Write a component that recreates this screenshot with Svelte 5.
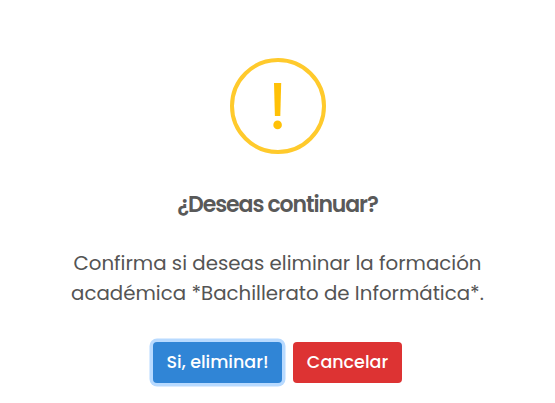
<script>
  const title = '¿Deseas continuar?';
  const lines = [
    'Confirma si deseas eliminar la formación',
    'académica *Bachillerato de Informática*.'
  ];
</script>

<main class="dialog" role="alertdialog" aria-label={title}>
  <svg class="icon" width="96" height="96" viewBox="0 0 96 96" aria-hidden="true">
    <circle cx="48" cy="48" r="46" fill="none" stroke="#ffca2c" stroke-width="4" />
    <path d="M44 25h7.2l-.9 33h-5.4z" fill="#ffc107" />
    <circle cx="47.6" cy="66.9" r="4.3" fill="#ffc107" />
  </svg>
  <h2>{title}</h2>
  <p>
    {#each lines as line}
      <span>{line}</span>
    {/each}
  </p>
  <div class="actions">
    <button class="confirm" type="button">Si, eliminar!</button>
    <button class="cancel" type="button">Cancelar</button>
  </div>
</main>

<style>
  :global(body) {
    background: #fff;
  }
  .dialog {
    box-sizing: border-box;
    width: 555px;
    height: 403px;
    padding-top: 58px;
    display: flex;
    flex-direction: column;
    align-items: center;
    overflow: hidden;
    font-family: Poppins, Inter, sans-serif;
    color: #545454;
    -webkit-font-smoothing: antialiased;
  }
  .icon {
    display: block;
    margin-left: 1px;
  }
  h2 {
    margin: 35px 0 0;
    font-size: 22px;
    font-weight: 600;
    line-height: 32px;
    letter-spacing: -1.1px;
    color: #595959;
    white-space: nowrap;
  }
  p {
    margin: 27px 0 0;
    display: flex;
    flex-direction: column;
    align-items: center;
    font-size: 19.8px;
    line-height: 30px;
    white-space: nowrap;
  }
  .actions {
    display: flex;
    gap: 11px;
    margin-top: 34px;
  }
  button {
    height: 41px;
    padding: 0;
    border: 0;
    border-radius: 4px;
    color: #fff;
    font: inherit;
    font-size: 17.5px;
    font-weight: 500;
    line-height: 41px;
    white-space: nowrap;
  }
  .confirm {
    width: 129px;
    background: #3085d6;
    box-shadow: 0 0 0 3.5px #b8daff;
  }
  .cancel {
    width: 109px;
    background: #dd3333;
  }
</style>
